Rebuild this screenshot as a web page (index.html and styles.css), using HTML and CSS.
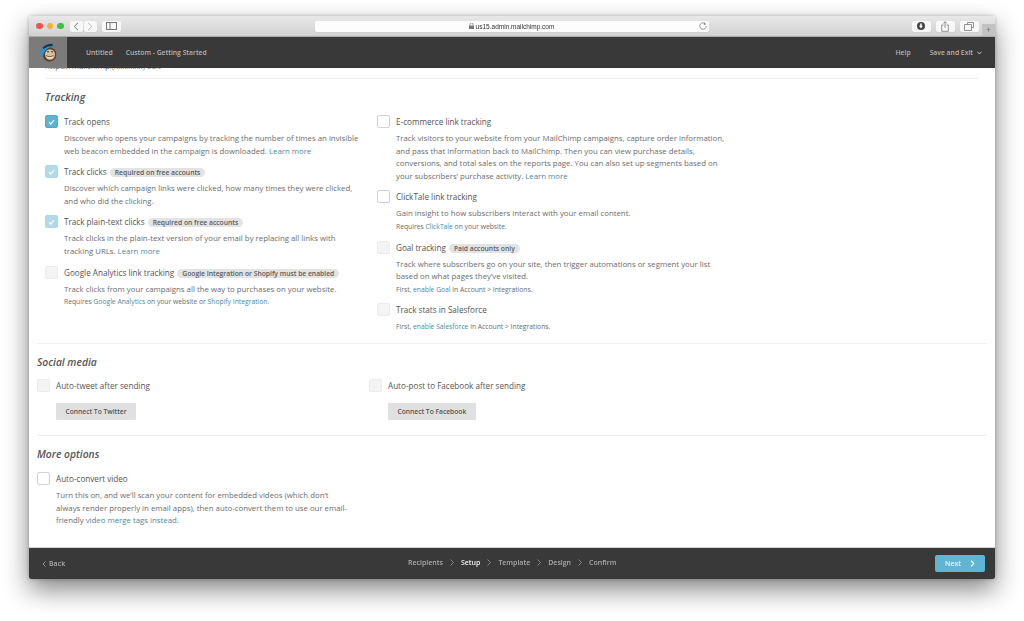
FILE: index.html
```html
<!DOCTYPE html>
<html lang="en">
<head>
<meta charset="utf-8">
<title>MailChimp campaign setup</title>
<link rel="stylesheet" href="styles.css">
</head>
<body>
<div class="window">
  <header class="toolbar">
    <div class="lights"><i class="light red"></i><i class="light yellow"></i><i class="light green"></i></div>
    <div class="navpair">
      <span class="tbtn half"><svg width="6" height="9" viewBox="0 0 6 9"><path d="M5 .8 1.200 4.500 5 8.200" fill="none" stroke="#777" stroke-width="1"/></svg></span>
      <span class="tbtn half"><svg width="6" height="9" viewBox="0 0 6 9"><path d="M1 .8 4.800 4.500 1 8.200" fill="none" stroke="#bbb" stroke-width="1"/></svg></span>
    </div>
    <span class="tbtn side"><svg width="11" height="8" viewBox="0 0 11 8"><rect x=".5" y=".5" width="10" height="7" fill="none" stroke="#777"/><path d="M4 .5v7" stroke="#777"/></svg></span>
    <div class="address">
      <span class="url"><svg class="lock" width="5" height="6" viewBox="0 0 5 6"><rect y="2.500" width="5" height="3.500" fill="#777"/><path d="M1 2.500V1.500a1.500 1.500 0 0 1 3 0v1" fill="none" stroke="#777" stroke-width=".8"/></svg>us15.admin.mailchimp.com</span>
      <svg class="reload" width="8" height="8" viewBox="0 0 8 8"><path d="M6.600 2.200A3.200 3.200 0 1 0 7.200 4" fill="none" stroke="#777" stroke-width=".8"/><path d="M5.200 .4 7 2.400 4.800 2.800z" fill="#777"/></svg>
    </div>
    <div class="tools">
      <span class="tbtn tool"><svg width="8" height="8" viewBox="0 0 8 8"><circle cx="4" cy="4" r="4" fill="#444"/><path d="M3.200 1.500h1.600v2.300H6L4 6.400 2 3.800h1.200z" fill="#fff"/></svg></span>
      <span class="tbtn tool"><svg width="8" height="11" viewBox="0 0 8 11"><path d="M2.500 4H.7v6.300h6.600V4H5.500M4 7V.8M2.300 2.400 4 .7l1.700 1.700" fill="none" stroke="#777" stroke-width=".8"/></svg></span>
      <span class="tbtn tool"><svg width="10" height="9" viewBox="0 0 10 9"><path d="M3.500 2.500V.5h6v5h-2M.5 2.500h7v6h-7z" fill="none" stroke="#777" stroke-width=".8"/></svg></span>
    </div>
    <span class="newtab">+</span>
  </header>

  <nav class="topbar">
    <div class="logo">
      <svg width="18" height="19" viewBox="0 0 18 19">
        <ellipse cx="10.500" cy="11.500" rx="6.800" ry="7.200" fill="#5a4130"/>
        <ellipse cx="11" cy="11.500" rx="5" ry="5.200" fill="#d9c09a"/>
        <path d="M7 12.500c2.200 1.500 5 1.500 7.500 0l-1 2.500c-1.800.8-3.800.6-5.300-.4z" fill="#f2ead9"/>
        <path d="M7 12.500c2.200 1.500 5 1.500 7.500 0" fill="none" stroke="#4b3526" stroke-width=".8"/>
        <circle cx="9" cy="8.800" r=".8" fill="#2a2a2a"/><circle cx="13" cy="8.800" r=".8" fill="#2a2a2a"/>
        <path d="M.6 11C1 6 6 1.200 13 .8c1.300 1.500 1 2.700.2 3C8.500 4.500 5.500 7.500 4.300 11.800 2.500 12.800 .8 12.500.6 11z" fill="#2f93cf"/>
        <path d="M3.500 4.500C6 2.200 9.500.9 13 .8c.8 1 .9 1.600.7 2.200C10 3 6.500 4.200 4.300 6.300z" fill="#1c3346"/>
      </svg>
    </div>
    <a class="crumb first">Untitled</a>
    <a class="crumb">Custom - Getting Started</a>
    <a class="crumb right">Help</a>
    <a class="crumb save">Save and Exit <svg width="5" height="4" viewBox="0 0 5 4"><path d="M.4.700 2.500 3 4.600.700" fill="none" stroke="#c8c8c8" stroke-width="1"/></svg></a>
  </nav>

  <main class="content">
    <div class="clipped">https://mailchimp.(xxxxxxx) <a class="link">Edit</a></div>
    <section class="tracking">
      <h2>Tracking</h2>
      <div class="cols">
        <div class="col">
          <div class="item">
            <span class="box on"><svg width="7" height="6" viewBox="0 0 7 6"><path d="M1 3.200 2.800 5 6 1" fill="none" stroke="#fff" stroke-width="1.200"/></svg></span>
            <div class="body"><h3>Track opens</h3><p>Discover who opens your campaigns by tracking the number of times an invisible web beacon embedded in the campaign is downloaded. <a class="link">Learn more</a></p></div>
          </div>
          <div class="item">
            <span class="box faded"><svg width="7" height="6" viewBox="0 0 7 6"><path d="M1 3.200 2.800 5 6 1" fill="none" stroke="#fff" stroke-width="1.200"/></svg></span>
            <div class="body"><h3>Track clicks <span class="badge">Required on free accounts</span></h3><p>Discover which campaign links were clicked, how many times they were clicked, and who did the clicking.</p></div>
          </div>
          <div class="item">
            <span class="box faded"><svg width="7" height="6" viewBox="0 0 7 6"><path d="M1 3.200 2.800 5 6 1" fill="none" stroke="#fff" stroke-width="1.200"/></svg></span>
            <div class="body"><h3>Track plain-text clicks <span class="badge">Required on free accounts</span></h3><p>Track clicks in the plain-text version of your email by replacing all links with tracking URLs. <a class="link">Learn more</a></p></div>
          </div>
          <div class="item">
            <span class="box off"></span>
            <div class="body"><h3>Google Analytics link tracking <span class="badge">Google Integration or Shopify must be enabled</span></h3><p>Track clicks from your campaigns all the way to purchases on your website.</p><small>Requires <a class="link">Google Analytics</a> on your website or <a class="link">Shopify Integration</a>.</small></div>
          </div>
        </div>
        <div class="col">
          <div class="item">
            <span class="box"></span>
            <div class="body"><h3>E-commerce link tracking</h3><p>Track visitors to your website from your MailChimp campaigns, capture order information, and pass that information back to MailChimp. Then you can view purchase details, conversions, and total sales on the reports page. You can also set up segments based on your subscribers’ purchase activity. <a class="link">Learn more</a></p></div>
          </div>
          <div class="item">
            <span class="box"></span>
            <div class="body"><h3>ClickTale link tracking</h3><p>Gain insight to how subscribers interact with your email content.</p><small>Requires <a class="link">ClickTale</a> on your website.</small></div>
          </div>
          <div class="item">
            <span class="box off"></span>
            <div class="body"><h3>Goal tracking <span class="badge">Paid accounts only</span></h3><p>Track where subscribers go on your site, then trigger automations or segment your list based on what pages they’ve visited.</p><small>First, <a class="link">enable Goal</a> in Account &gt; Integrations.</small></div>
          </div>
          <div class="item">
            <span class="box off"></span>
            <div class="body"><h3>Track stats in Salesforce</h3><small>First, <a class="link">enable Salesforce</a> in Account &gt; Integrations.</small></div>
          </div>
        </div>
      </div>
    </section>

    <section class="social">
      <h2>Social media</h2>
      <div class="cols">
        <div class="col">
          <div class="item"><span class="box off"></span><div class="body"><h3>Auto-tweet after sending</h3><button class="connect">Connect To Twitter</button></div></div>
        </div>
        <div class="col">
          <div class="item"><span class="box off"></span><div class="body"><h3>Auto-post to Facebook after sending</h3><button class="connect">Connect To Facebook</button></div></div>
        </div>
      </div>
    </section>

    <section class="more">
      <h2>More options</h2>
      <div class="item narrow">
        <span class="box"></span>
        <div class="body"><h3>Auto-convert video</h3><p>Turn this on, and we’ll scan your content for embedded videos (which don’t always render properly in email apps), then auto-convert them to use our email-friendly <a class="link">video merge tags instead</a>.</p></div>
      </div>
    </section>
  </main>

  <footer class="bottombar">
    <a class="back"><svg width="4" height="6" viewBox="0 0 4 6"><path d="M3.500.5 1 3l2.500 2.500" fill="none" stroke="#aaa" stroke-width=".8"/></svg>Back</a>
    <div class="steps">
      <span>Recipients</span><svg class="sep" width="4" height="7" viewBox="0 0 4 7"><path d="M.5.500 3.500 3.500.5 6.500" fill="none" stroke="#999" stroke-width=".8"/></svg>
      <span class="current">Setup</span><svg class="sep" width="4" height="7" viewBox="0 0 4 7"><path d="M.5.500 3.500 3.500.5 6.500" fill="none" stroke="#999" stroke-width=".8"/></svg>
      <span>Template</span><svg class="sep" width="4" height="7" viewBox="0 0 4 7"><path d="M.5.500 3.500 3.500.5 6.500" fill="none" stroke="#999" stroke-width=".8"/></svg>
      <span>Design</span><svg class="sep" width="4" height="7" viewBox="0 0 4 7"><path d="M.5.500 3.500 3.500.5 6.500" fill="none" stroke="#999" stroke-width=".8"/></svg>
      <span>Confirm</span>
    </div>
    <button class="next">Next <svg width="5" height="7" viewBox="0 0 5 7"><path d="M1 .7 3.800 3.500 1 6.300" fill="none" stroke="#fff" stroke-width="1.200"/></svg></button>
  </footer>
</div>
</body>
</html>
```

FILE: styles.css
```css
* { box-sizing: border-box; }
html, body { margin: 0; height: 100%; background: #fff; overflow: hidden; }
body { padding: 16px 29px 42px; font-family: "Open Sans", sans-serif; color: #5e5e5e; }

.window {
  height: 563px;
  display: flex;
  flex-direction: column;
  border-radius: 3px 3px 2px 2px;
  background: #fff;
  box-shadow: 0 11px 26px rgba(0, 0, 0, .48), 0 0 4px rgba(0, 0, 0, .25);
  filter: blur(.45px);
}

/* Browser chrome */
.toolbar {
  height: 21px;
  flex: none;
  display: flex;
  align-items: center;
  padding: 0 0 0 7px;
  background: linear-gradient(#e9e8e9, #d3d2d3);
  border-bottom: 1px solid #acabac;
  border-radius: 3px 3px 0 0;
  position: relative;
}
.lights { display: flex; gap: 4px; margin-right: 6px; }
.light { width: 6.500px; height: 6.500px; border-radius: 50%; }
.red { background: #f0524f; }
.yellow { background: #f4b12e; }
.green { background: #3dc043; }
.navpair { display: flex; gap: 1px; margin-right: 5px; }
.tbtn {
  height: 11px;
  display: flex;
  align-items: center;
  justify-content: center;
  background: #f8f8f8;
  border-radius: 2px;
  box-shadow: 0 .5px 0 #c4c4c4;
}
.half { width: 13px; }
.side { width: 19px; margin-right: 194px; }
.address {
  width: 394px;
  height: 11px;
  position: relative;
  flex: none;
  background: #fdfdfd;
  border-radius: 2px;
  box-shadow: 0 .5px 0 #c4c4c4;
  display: flex;
  align-items: center;
  justify-content: center;
}
.url { font-size: 6.500px; color: #333; font-family: "Liberation Sans", sans-serif; display: flex; align-items: center; gap: 2px; }
.reload { position: absolute; right: 2px; top: 1.500px; }
.tools { display: flex; gap: 5px; margin-left: 203px; }
.tool { width: 19px; }
.newtab {
  position: absolute;
  right: 0;
  bottom: 0;
  width: 13px;
  height: 12px;
  background: #c4c3c4;
  color: #777;
  font-size: 9px;
  line-height: 12px;
  text-align: center;
}

/* App top bar */
.topbar {
  height: 31px;
  flex: none;
  display: flex;
  align-items: center;
  background: #393939;
  font-size: 6.800px;
  font-weight: 600;
  color: #b4b4b4;
}
.logo {
  width: 38px;
  height: 31px;
  display: flex;
  align-items: center;
  justify-content: center;
  background: #7b7b7b;
  margin-right: 19px;
}
.crumb { margin-right: 13px; }
.right { margin-left: auto; margin-right: 19px; }
.save { margin-right: 13px; display: flex; align-items: center; gap: 4px; }

/* Scrolled content */
.content {
  flex: 1;
  min-height: 0;
  overflow: hidden;
  padding: 0 8px;
  background: #fff;
}
.clipped {
  height: 17px;
  margin: -7px 8px 0;
  font-size: 7.820px;
  line-height: 10px;
  color: #666;
  white-space: nowrap;
}
.tracking {
  padding: 0 8px 2px;
  border-bottom: 1px solid #efefef;
}
.tracking h2 { border-top: 1px solid #efefef; padding-top: 10px; margin-bottom: 10px; }
h2 {
  margin: 0 0 9px;
  font-size: 10.300px;
  line-height: 16px;
  font-weight: 600;
  font-style: italic;
  color: #555;
}
.cols { display: flex; }
.col { width: 332px; }
.item { display: flex; gap: 6px; margin-bottom: 8px; }
.tracking .col:last-child { width: 352px; }
.body { flex: 1; min-width: 0; }
.box {
  width: 13px;
  height: 13px;
  flex: none;
  display: flex;
  align-items: center;
  justify-content: center;
  border-radius: 2px;
  border: 1px solid #d2d2d2;
  background: #fff;
}
.on { background: #5eb3d2; border-color: #55a9c8; }
.faded { background: #b2dbe9; border-color: #aed7e6; }
.off { background: #f4f4f4; border-color: #ececec; }
h3 {
  margin: 0 0 3px;
  font-size: 8.150px;
  line-height: 14px;
  font-weight: 500;
  color: #555;
  white-space: nowrap;
}
p { margin: 0; font-size: 7.820px; line-height: 12.600px; color: #6c6c6c; }
small { display: block; padding-top: 1px; margin-bottom: -1px; font-size: 6.750px; line-height: 12.600px; color: #6c6c6c; }
.link { color: #4a8aa2; }
.badge {
  display: inline-block;
  margin-left: 1px;
  padding: 0 5px;
  border-radius: 5px;
  background: #e3e3e3;
  font-size: 6.750px;
  line-height: 9px;
  font-weight: 600;
  color: #5c5c5c;
}
.col:first-child .body { max-width: 300px; }
.social { padding-top: 10px; border-bottom: 1px solid #efefef; padding-bottom: 7px; }
.social .col { width: 332px; }
.connect {
  display: block;
  height: 17px;
  padding: 0 9.500px;
  margin: 10px 0 0;
  border: 0;
  border-radius: 1px;
  background: #e0e0e0;
  font-family: inherit;
  font-size: 6.700px;
  font-weight: 600;
  color: #555;
}
.more { padding-top: 10px; }
.more h2 { margin-bottom: 10px; }
.narrow { width: 315px; }

/* App footer */
.bottombar {
  height: 32px;
  flex: none;
  display: flex;
  align-items: center;
  background: #393939;
  border-top: 1px solid #cfcfcf;
  border-radius: 0 0 2px 2px;
  font-size: 7px;
  font-weight: 600;
  color: #aaa;
  position: relative;
  background-clip: padding-box;
}
.back { display: flex; align-items: center; gap: 3px; margin-left: 13px; }
.steps { display: flex; align-items: center; position: absolute; left: 379px; top: 10px; }
.sep { margin: 0 7px; }
.current { color: #f0f0f0; }
.next {
  margin-left: auto;
  margin-right: 10px;
  width: 50px;
  height: 17px;
  display: flex;
  align-items: center;
  justify-content: center;
  gap: 9px;
  border: 0;
  border-radius: 2px;
  background: #61b5d4;
  font-family: inherit;
  font-size: 7px;
  font-weight: 600;
  color: #e8f5fa;
}
```
